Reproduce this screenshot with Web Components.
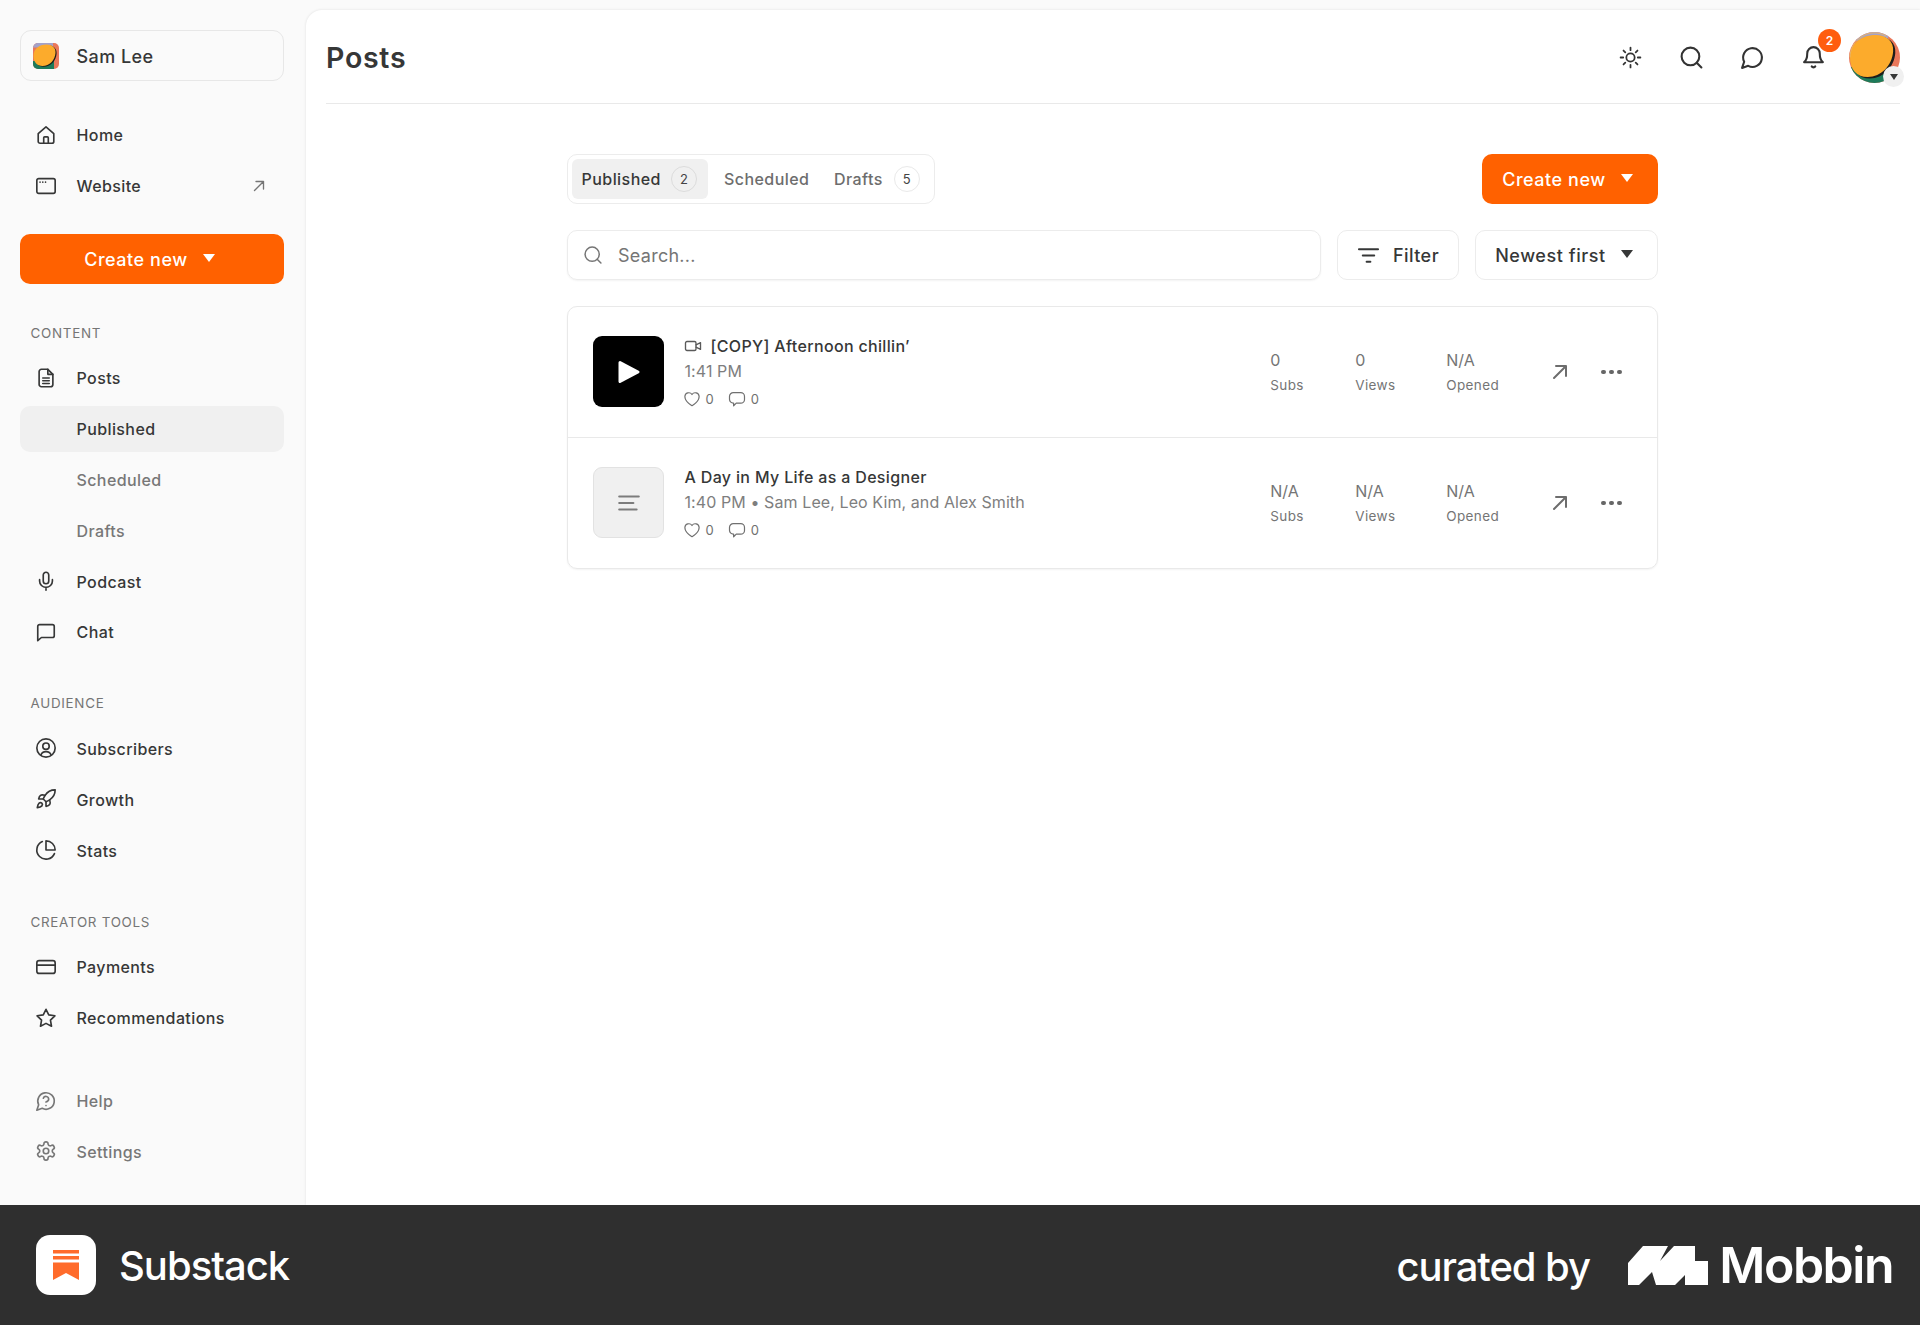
<!DOCTYPE html>
<html lang="en"><head><meta charset="utf-8"><title>Posts</title>
<style>
html,body{margin:0;padding:0;background:#fafafa}
body{width:1920px;height:1325px;overflow:hidden;font-family:Inter,"Liberation Sans",sans-serif;color:#363737;letter-spacing:.4px}
</style></head><body>
<app-shell>
  <side-bar slot="side">
    <account-box>Sam Lee</account-box>
    <nav-group>
      <nav-item icon="home">Home</nav-item>
      <nav-item icon="web" external>Website</nav-item>
    </nav-group>
    <create-button style="margin-top:25px;height:50px">Create new</create-button>
    <nav-group label="CONTENT" style="margin-top:41px">
      <nav-item icon="file">Posts</nav-item>
      <nav-item active>Published</nav-item>
      <nav-item muted>Scheduled</nav-item>
      <nav-item muted>Drafts</nav-item>
      <nav-item icon="mic">Podcast</nav-item>
      <nav-item icon="chat">Chat</nav-item>
    </nav-group>
    <nav-group label="AUDIENCE" style="margin-top:40.2px">
      <nav-item icon="user">Subscribers</nav-item>
      <nav-item icon="rocket">Growth</nav-item>
      <nav-item icon="pie">Stats</nav-item>
    </nav-group>
    <nav-group label="CREATOR TOOLS" style="margin-top:40.6px">
      <nav-item icon="card">Payments</nav-item>
      <nav-item icon="star">Recommendations</nav-item>
    </nav-group>
    <nav-group style="margin-top:37px">
      <nav-item icon="help" muted>Help</nav-item>
      <nav-item icon="gear" muted>Settings</nav-item>
    </nav-group>
  </side-bar>
  <main-panel slot="main">
    <top-bar>Posts</top-bar>
    <posts-view>
      <post-row kind="video" title="[COPY] Afternoon chillin’" meta="1:41 PM" subs="0" views="0" opened="N/A"></post-row>
      <post-row kind="text" title="A Day in My Life as a Designer" meta="1:40 PM • Sam Lee, Leo Kim, and Alex Smith" subs="N/A" views="N/A" opened="N/A"></post-row>
    </posts-view>
  </main-panel>
  <brand-footer slot="foot"></brand-footer>
</app-shell>
<script>
const P={
home:'<path d="M3.5 10.6 12 3.2l8.5 7.4V19a2 2 0 0 1-2 2h-13a2 2 0 0 1-2-2z"/><path d="M9.5 21v-6a1 1 0 0 1 1-1h3a1 1 0 0 1 1 1v6"/>',
web:'<rect x="2" y="4" width="20" height="16" rx="2"/><path d="M5.5 7.8h.01M8.5 7.8h.01M11.5 7.8h.01"/>',
file:'<path d="M14 2.5H7A2.5 2.5 0 0 0 4.5 5v14A2.5 2.5 0 0 0 7 21.500h10a2.5 2.5 0 0 0 2.5-2.5V8z"/><path d="M14 2.5V8h5.5M8.5 12h7M8.5 15h7M8.5 18h7"/>',
mic:'<path d="M12 2.5a3 3 0 0 0-3 3V12a3 3 0 0 0 6 0V5.500a3 3 0 0 0-3-3Z"/><path d="M19 10.5V12a7 7 0 0 1-14 0v-1.5M12 19v3"/>',
chat:'<path d="M3 21.5V6a2 2 0 0 1 2-2h14a2 2 0 0 1 2 2v10a2 2 0 0 1-2 2H7z"/>',
user:'<circle cx="12" cy="12" r="10"/><circle cx="12" cy="10" r="3.5"/><path d="M6.500 19.500c.8-2.5 2.8-3.5 5.500-3.5s4.700 1 5.500 3.500"/>',
rocket:'<path d="M4.5 16.5c-1.500 1.26-2 5-2 5s3.740-.5 5-2c.71-.84.7-2.13-.09-2.91a2.18 2.18 0 0 0-2.910-.09z"/><path d="m12 15-3-3a22 22 0 0 1 2-3.95A12.88 12.88 0 0 1 22 2c0 2.72-.78 7.5-6 11a22.35 22.35 0 0 1-4 2z"/><path d="M9 12H4s.55-3.03 2-4c1.62-1.08 5 0 5 0M12 15v5s3.03-.55 4-2c1.08-1.62 0-5 0-5"/>',
pie:'<path d="M21.21 15.89A10 10 0 1 1 8 2.83"/><path d="M22 12A10 10 0 0 0 12 2v10z"/>',
card:'<rect x="2" y="5" width="20" height="14" rx="2.5"/><path d="M2 10h20"/>',
star:'<path d="m12 2.500 3 6.100 6.700 1-4.850 4.700 1.150 6.700-6-3.150L6 21l1.150-6.700L2.300 9.600l6.700-1z"/>',
help:'<path d="M7.9 20A9 9 0 1 0 4 16.1L2 22Z"/><path d="M9.09 9a3 3 0 0 1 5.83 1c0 2-3 3-3 3M12 17h.01"/>',
gear:'<path d="M12.22 2h-.44a2 2 0 0 0-2 2v.18a2 2 0 0 1-1 1.73l-.43.25a2 2 0 0 1-2 0l-.15-.08a2 2 0 0 0-2.73.73l-.22.38a2 2 0 0 0 .73 2.73l.15.1a2 2 0 0 1 1 1.72v.51a2 2 0 0 1-1 1.74l-.15.09a2 2 0 0 0-.73 2.73l.22.38a2 2 0 0 0 2.73.73l.15-.08a2 2 0 0 1 2 0l.43.25a2 2 0 0 1 1 1.73V20a2 2 0 0 0 2 2h.44a2 2 0 0 0 2-2v-.18a2 2 0 0 1 1-1.73l.43-.25a2 2 0 0 1 2 0l.15.08a2 2 0 0 0 2.73-.73l.22-.39a2 2 0 0 0-.73-2.73l-.15-.08a2 2 0 0 1-1-1.74v-.5a2 2 0 0 1 1-1.74l.15-.09a2 2 0 0 0 .73-2.73l-.22-.38a2 2 0 0 0-2.73-.73l-.15.08a2 2 0 0 1-2 0l-.43-.25a2 2 0 0 1-1-1.73V4a2 2 0 0 0-2-2z"/><circle cx="12" cy="12" r="3"/>',
arrow:'<path d="M6 18 18 6M8 6h10v10"/>',
sun:'<circle cx="12" cy="12" r="4"/><path d="M12 2.5V5M12 19v2.500M5.300 5.300 7 7M17 17l1.700 1.700M2.500 12H5M19 12h2.500M5.300 18.700 7 17M17 7l1.700-1.700"/>',
search:'<circle cx="11" cy="11" r="8.5"/><path d="m21.5 21.5-4.500-4.500"/>',
bubble:'<path d="M7.9 20A9 9 0 1 0 4 16.1L2 22Z"/>',
bell:'<path d="M6 8a6 6 0 0 1 12 0c0 6.500 3 8.500 3 8.500H3s3-2 3-8.500"/><path d="M10.3 20.5a2 2 0 0 0 3.400 0"/>',
filter:'<path d="M2 5.5h20M6 12h12M10 18.500h4"/>',
video:'<rect x="2" y="6" width="14" height="12" rx="2"/><path d="m16 10.500 6-3v9l-6-3"/>',
heart:'<path d="M12 21S2.500 15.500 2.500 8.700A5.200 5.200 0 0 1 12 6a5.200 5.200 0 0 1 9.500 2.700C21.500 15.500 12 21 12 21z"/>',
comment:'<path d="M7 3.500h10a5 5 0 0 1 5 5v4a5 5 0 0 1-5 5h-6l-3.500 3.500v-3.600A5 5 0 0 1 2 12.500v-4a5 5 0 0 1 5-5z"/>',
lines:'<path d="M3 6h18M3 12h13M3 18h16"/>'
};
const ART=()=>`<rect width="52" height="52" fill="#e9775a"/><path d="M0 0H40V9H0z" fill="#a4a2c9"/><path d="M0 36H42V52H0z" fill="#1e7a5a"/><path transform="translate(2.200 1.500)" d="M1 26C1 12 12 3 27 3c11 0 19 6 18 17-1 14-12 26-26 26C8 46 1 38 1 26z" fill="#1d1d1b"/><path d="M1 26C1 12 12 3 27 3c11 0 19 6 18 17-1 14-12 26-26 26C8 46 1 38 1 26z" fill="#fcab2c"/>`;
function def(name,css,html){
  customElements.define(name,class extends HTMLElement{
    constructor(){super();this.attachShadow({mode:'open'});}
    connectedCallback(){this.shadowRoot.innerHTML='<style>'+css+'</style>'+(typeof html==='function'?html(this):html);}
  });
}
def('ui-icon',':host{display:inline-flex;flex:none;color:inherit}svg{display:block;fill:none;stroke:currentColor;stroke-linecap:round;stroke-linejoin:round}',e=>{
  const s=e.getAttribute('size')||22,w=e.getAttribute('stroke')||2;
  return '<svg width="'+s+'" height="'+s+'" viewBox="0 0 24 24" stroke-width="'+w+'">'+(P[e.getAttribute('name')]||'')+'</svg>';
});
def('app-shell',':host{display:grid;grid-template-columns:306px 1fr;grid-template-rows:1205px 120px;width:1920px;height:1325px}::slotted([slot=foot]){grid-column:1/3}','<slot name="side"></slot><slot name="main"></slot><slot name="foot"></slot>');
def('side-bar',':host{display:flex;flex-direction:column;padding:30px 22px 0 20px;box-sizing:border-box;background:#fafafa;height:1205px}','<slot></slot>');
def('account-box',`:host{display:flex;align-items:center;height:51px;box-sizing:border-box;border:1.5px solid #e7e7e7;border-radius:11px;padding-left:12px;font-size:18px;font-weight:500;letter-spacing:.45px;color:#363737;gap:17.5px;margin-bottom:31px}
svg{display:block;flex:none}span{padding-top:1px}`,`<svg width="26" height="26" viewBox="0 0 52 52"><defs><clipPath id="c"><rect width="52" height="52" rx="10"/></clipPath></defs><g clip-path="url(#c)">${ART()}</g></svg><span><slot></slot></span>`);
def('nav-group',`:host{display:flex;flex-direction:column;gap:5px}
.l{font-size:13.4px;letter-spacing:.72px;color:#757575;padding-left:10.5px;line-height:16px;margin-bottom:9.5px}`,e=>(e.hasAttribute('label')?'<div class="l">'+e.getAttribute('label')+'</div>':'')+'<slot></slot>');
def('nav-item',`:host{display:flex;align-items:center;height:45.8px;border-radius:10px;font-size:16px;font-weight:500;color:#363737;padding-left:14.5px;padding-right:16px}
:host([active]){background:#f0f0f0}:host([muted]){color:#777}
.i{width:22px;margin-right:20px;display:flex;flex:none}.t{flex:1;padding-top:1px}.x{color:#757575;display:flex}`,e=>'<span class="i">'+(e.hasAttribute('icon')?'<ui-icon name="'+e.getAttribute('icon')+'" size="22" stroke="1.8"></ui-icon>':'')+'</span><span class="t"><slot></slot></span>'+(e.hasAttribute('external')?'<span class="x"><ui-icon name="arrow" size="18" stroke="1.800"></ui-icon></span>':''));
def('create-button',`:host{display:flex;align-items:center;justify-content:center;height:51px;box-sizing:border-box;background:#ff6100;color:#fff;border-radius:10px;font-size:18px;font-weight:500;letter-spacing:.55px;gap:15.5px}
i{display:block;width:0;height:0;border-left:6.5px solid transparent;border-right:6.5px solid transparent;border-top:8px solid currentColor;margin:-2px 4.6px 0 0}span{padding-top:1px}`,'<span><slot></slot></span><i></i>');
def('main-panel',`:host{display:flex;flex-direction:column;background:#fff;margin-top:10px;border-radius:16px 0 0 0;box-shadow:0 0 3px rgba(0,0,0,.11);padding-left:20px;height:1195px;box-sizing:border-box}`,'<slot></slot>');
def('top-bar',`:host{display:flex;align-items:center;height:94px;box-sizing:border-box;border-bottom:1.5px solid #e9e9e9;width:1574px;font-size:28.5px;font-weight:600;letter-spacing:.72px;color:#363737;flex:none}
h1{font:inherit;margin:2px 0 0;flex:1}
.ics{display:flex;align-items:center;color:#333;margin-top:1px}
.ics>span{width:61px;display:flex;justify-content:center;position:relative}
.b{position:absolute;left:35px;top:-16px;width:23px;height:23px;border-radius:50%;background:#ff5d0e;color:#fff;font-size:12px;font-weight:600;letter-spacing:0;display:flex;align-items:center;justify-content:center}
.av{position:relative;width:51px;height:51px;margin-left:5px}
.av svg{display:block}
.c{position:absolute;right:-4px;bottom:-4px;width:21px;height:21px;border-radius:50%;background:#f0f0f0;display:flex;align-items:center;justify-content:center}
.c i{display:block;width:0;height:0;border-left:4.5px solid transparent;border-right:4.5px solid transparent;border-top:6px solid #363737;margin-top:2px}`,
`<h1><slot></slot></h1><div class="ics"><span><ui-icon name="sun" size="25" stroke="1.7"></ui-icon></span><span><ui-icon name="search" size="25" stroke="2"></ui-icon></span><span><ui-icon name="bubble" size="25" stroke="2"></ui-icon></span><span><ui-icon name="bell" size="25" stroke="2"></ui-icon><span class="b">2</span></span>
<div class="av"><svg width="51" height="51" viewBox="0 0 52 52"><defs><clipPath id="a"><circle cx="26" cy="26" r="26"/></clipPath></defs><g clip-path="url(#a)">${ART()}</g><path d="M1 26A25 25 0 0 1 38 4" fill="none" stroke="#e6b66a" stroke-width="1"/></svg><span class="c"><i></i></span></div></div>`);
def('posts-view',`:host{display:flex;flex-direction:column;width:1091px;margin:50px 0 0 241px}
.r{display:flex;align-items:center;justify-content:space-between;height:50px}
.tabs{display:flex;align-items:center;height:50px;box-sizing:border-box;border:1.5px solid #ececec;border-radius:10px;padding:0 14.5px 0 3.5px;font-size:16px;font-weight:500;letter-spacing:.45px;color:#6d6d6d}
.tab{display:flex;align-items:center;height:40px;border-radius:6px;padding:0 11px 0 10px;gap:10px}
.tab.on{background:#f0f0f0;color:#363737;margin-right:16px}
.tab.plain{padding:0;gap:11px}
.tab.sch{margin-right:24.5px}
.n{width:26px;height:26px;box-sizing:border-box;border-radius:50%;border:1.5px solid #e9e9e9;display:flex;align-items:center;justify-content:center;font-size:13px;font-weight:400;letter-spacing:0;color:#444;background:#fff}
.on .n{background:#f0f0f0;border-color:#dcdcdc}
create-button{width:176px;height:50px}
.tools{display:flex;gap:16px;margin-top:26px;height:50px}
.search,.btn{display:flex;align-items:center;box-sizing:border-box;border:1.5px solid #ececec;border-radius:10px;height:50px}
.search{flex:1;padding-left:15px;gap:15px;color:#757575;font-size:18px;letter-spacing:.27px;box-shadow:0 1px 2px rgba(0,0,0,.05)}
.search span,.btn span{padding-top:1px}
.btn{color:#363737;font-size:18px;font-weight:500;letter-spacing:.55px;justify-content:center}
.filter{width:122px;gap:13px;letter-spacing:.45px}.sort{width:183px;gap:15.5px}
.sort i{display:block;width:0;height:0;border-left:6.5px solid transparent;border-right:6.5px solid transparent;border-top:8px solid currentColor;margin:-2px 4.6px 0 0}
.list{margin-top:26px;border:1.5px solid #e9e9e9;border-radius:10px;box-shadow:0 1px 2px rgba(0,0,0,.05);display:flex;flex-direction:column}
::slotted(post-row:not(:last-child)){border-bottom:1.5px solid #e9e9e9}`,
`<div class="r"><div class="tabs"><div class="tab on">Published<span class="n">2</span></div><div class="tab plain sch">Scheduled</div><div class="tab plain">Drafts<span class="n">5</span></div></div><create-button>Create new</create-button></div>
<div class="tools"><div class="search"><ui-icon name="search" size="20" stroke="1.8"></ui-icon><span>Search...</span></div><div class="btn filter"><ui-icon name="filter" size="23" stroke="2"></ui-icon><span>Filter</span></div><div class="btn sort"><span>Newest first</span><i></i></div></div>
<div class="list"><slot></slot></div>`);
def('post-row',`:host{display:flex;align-items:center;height:129.5px;padding-left:25px;color:#757575}
:host(:last-child){height:130.5px}
.th{width:71px;height:71px;box-sizing:border-box;border-radius:9px;flex:none;display:flex;align-items:center;justify-content:center;margin-right:20.5px}
.video{background:#000}.text{background:#f0f0f0;border:1.5px solid #e2e2e2;color:#7c7c7c}
.m{flex:1;display:flex;flex-direction:column;min-width:0}
.t{display:flex;align-items:center;gap:9px;font-size:16px;font-weight:500;color:#363737;height:24px;box-sizing:border-box;padding-top:1px;letter-spacing:.34px}
.t ui-icon{color:#5a5a5a;margin-left:-1px}
.s{font-size:16px;line-height:24px;margin-top:2px;color:#7e7e7e;height:24px;letter-spacing:.09px}
.c{display:flex;align-items:center;font-size:13px;letter-spacing:0;margin-top:3.5px;margin-left:-2px;height:24px;color:#707070}
.c span{margin-left:5px;margin-right:14px}
.st{display:flex;flex-direction:column;font-size:16px;letter-spacing:0;color:#757575;line-height:24px;flex:none}
.st small{font-size:13.5px;letter-spacing:.4px;line-height:20px;margin-top:3px}
.s1{width:85px}.s2{width:91px}.s3{width:85px;margin-right:16.3px}
.ar{width:24px;color:#6d6d6d;display:flex;margin-right:29.5px;flex:none}
.d{display:flex;gap:3.5px;margin-right:35.5px;flex:none}.d i{width:4.5px;height:4.5px;border-radius:50%;background:#666;display:block}`,
e=>{const k=e.getAttribute('kind'),a=n=>e.getAttribute(n);return `<div class="th ${k}">${k==='video'?'<svg width="24" height="26" viewBox="0 0 24 26"><path d="M3 3.5 21 13 3 22.500z" fill="#fff" stroke="#fff" stroke-width="3" stroke-linejoin="round"/></svg>':'<ui-icon name="lines" size="26" stroke="2"></ui-icon>'}</div>
<div class="m"><div class="t">${k==='video'?'<ui-icon name="video" size="18" stroke="1.8"></ui-icon>':''}${a('title')}</div><div class="s">${a('meta')}</div><div class="c"><ui-icon name="heart" size="18" stroke="1.6"></ui-icon><span>0</span><ui-icon name="comment" size="18" stroke="1.6"></ui-icon><span>0</span></div></div>
<div class="st s1">${a('subs')}<small>Subs</small></div><div class="st s2">${a('views')}<small>Views</small></div><div class="st s3">${a('opened')}<small>Opened</small></div>
<div class="ar"><ui-icon name="arrow" size="24" stroke="2"></ui-icon></div><div class="d"><i></i><i></i><i></i></div>`});
def('brand-footer',`:host{display:flex;align-items:center;height:120px;background:#2f2f2f;color:#fff;padding:0 27px 0 36px;box-sizing:border-box}
.logo{width:60px;height:60px;border-radius:14px;background:#fff;display:flex;align-items:center;justify-content:center;margin-right:23px;flex:none}
.s{font-size:40px;font-weight:500;letter-spacing:-1px;flex:1;padding-top:1px}
.c{font-size:40px;font-weight:500;letter-spacing:-1.1px;margin-right:38px;padding-top:2px}
.mk{margin-right:11.5px;display:block;flex:none}
.m{font-size:50px;font-weight:600;letter-spacing:-1.5px}`,
`<div class="logo"><svg width="28" height="31" viewBox="0 0 28 31"><path fill="#ff6b2b" d="M1 0h26v3.500H1zM1 6h26v3.500H1zM1 12.500h26V30l-13-7-13 7z"/></svg></div><div class="s">Substack</div><div class="c">curated by</div><svg class="mk" width="80" height="39" viewBox="0 0 80 39" fill="#fff"><path d="M0 17 15 0H40L32 15 46 0H67V15H80V39H57V29L47 39H28L24 26 11 39H0Z"/></svg><div class="m">Mobbin</div>`);
</script>
</body></html>
